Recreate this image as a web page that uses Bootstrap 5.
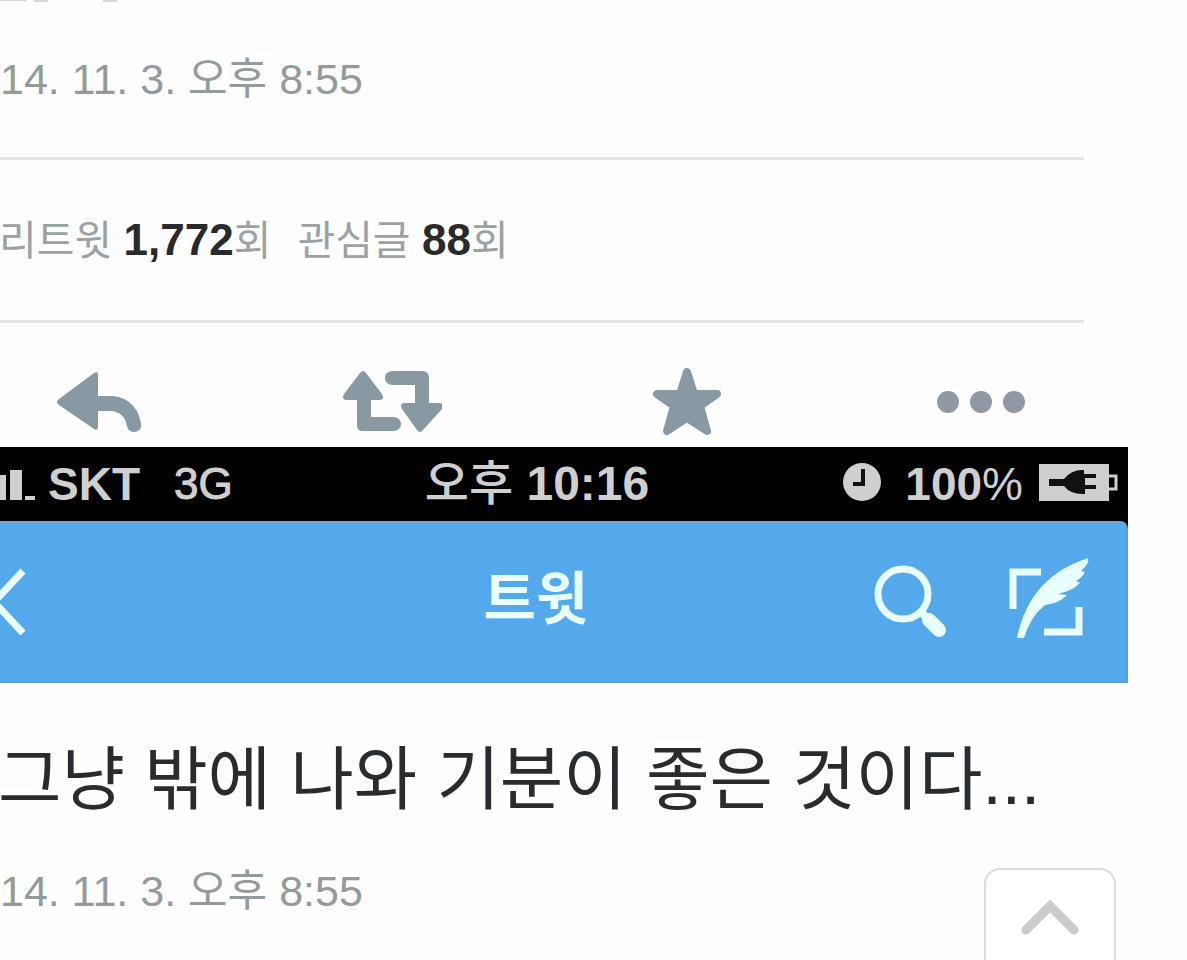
<!DOCTYPE html>
<html lang="ko">
<head>
<meta charset="utf-8">
<meta name="viewport" content="width=device-width, initial-scale=1">
<title>트윗</title>
<link href="https://cdn.jsdelivr.net/npm/bootstrap@5.3.0/dist/css/bootstrap.min.css" rel="stylesheet">
<style>
body{font-family:"Liberation Sans","Noto Sans CJK KR",sans-serif;background:#fefefe;color:#292c2f;overflow:hidden}
.phone{margin-right:59px}
.stamp{font-size:43px;line-height:60px;color:#929a9d}
.pre{height:49px}
.ruled{border-top:3px solid #e3e4e5;border-bottom:3px solid #e3e4e5;margin:48px 44px 0 0;height:166px}
.stats{font-size:41px;line-height:60px;color:#9aa2a6;gap:26px;margin-left:-1px}
.stats a{color:inherit}
.stats strong{font-size:44px;color:#292a2c}
.actions{height:124px;margin-left:-49px;padding-top:45px}
.plain{border:0;background:none;padding:0;line-height:0}
.status{background:#000;color:#cfcfcf;height:74px;font-size:46px;line-height:74px;font-weight:700}
.net{font-weight:400;-webkit-text-stroke:1px;font-size:44px;margin-left:34px}
.clock{font-size:48px}
.hangul{font-weight:500}
.percent{font-weight:400}
.topbar{background:#54a9ed;height:162px;color:#e9ffff;border-top:2px solid #6fa9d6;border-bottom:2px solid #5b9fd4;border-right:2px solid #5b9fd4;border-top-right-radius:8px}
.barwrap{background:linear-gradient(#000 16px,transparent 16px)}
/* the phone frame runs on past the left edge of the window */
.status,.topbar{margin-left:-54px}
.side{flex:1 1 0}
.lead-side>:first-child{margin-left:54px}
.topbar h1{font-size:57px;line-height:70px;font-weight:700;padding-bottom:6px}
.search{margin-right:57px}
.tweet{font-size:69px;line-height:96px;margin:50px 0 0 -2px}
.later{margin-top:32px}
.totop{right:71px;bottom:-40px;width:132px;height:132px;border:2px solid #dcdcdc;border-radius:16px;background:#fff;padding-top:28px}
</style>
</head>
<body>
<main class="phone">
  <div class="pre"><svg class="d-block" width="140" height="5" fill="#d4d6d7" aria-hidden="true"><path d="M0 0h26v1H0zM34 0h14v2H34zM103 0h14v2h-14z"/></svg></div>
  <div class="stamp text-nowrap">14. 11. 3. 오후 8:55</div>
  <section class="ruled d-flex align-items-center">
    <div class="stats d-flex text-nowrap">
      <a href="#" class="text-decoration-none">리트윗 <strong>1,772</strong>회</a>
      <a href="#" class="text-decoration-none">관심글 <strong>88</strong>회</a>
    </div>
  </section>
  <div class="actions row g-0 text-center">
    <div class="col-3"><button class="plain" aria-label="답글"><svg width="100" height="72" viewBox="0 0 100 72" fill="#8899a4"><path d="M50 7q0-4-4-2L11 31q-4 3 0 6l35 24q4 2 4-2V43h12c9 0 14 5 16 11 1 6 3 10 8 10s8-4 7-9c-3-17-15-27-31-27H50z"/></svg></button></div>
    <div class="col-3"><button class="plain" aria-label="리트윗"><svg width="100" height="72" viewBox="0 0 100 72" fill="#8899a4"><path d="M18 5q3-4 6 0l16 21q3 6-3 6h-8v17h22c5 0 8 3 8 7s-3 7-8 7H21q-6 0-6-6V32H5q-6 0-3-6zM81 62q-3 4-6 0L60 41q-3-6 3-6h10V17H51c-5 0-8-3-8-7s3-7 8-7h29q7 0 7 7v25h10q6 0 3 6z"/></svg></button></div>
    <div class="col-3"><button class="plain" aria-label="관심글"><svg width="100" height="72" viewBox="0 0 100 72" fill="#8899a4" stroke="#8899a4" stroke-width="8" stroke-linejoin="round"><path d="M50 4l7 22h23L63 38l7 25-20-13-20 13 7-25-17-12h23z"/></svg></button></div>
    <div class="col-3"><button class="plain" aria-label="더 보기"><svg width="100" height="72" viewBox="0 0 100 72"><g fill="#8f98a3"><circle cx="17" cy="34" r="11"/><circle cx="50" cy="34" r="11"/><circle cx="83" cy="34" r="11"/></g></svg></button></div>
  </div>
  <header>
    <div class="status d-flex align-items-center text-nowrap">
      <div class="side lead-side d-flex align-items-center">
        <svg width="48" height="44" fill="#cfcfcf" aria-hidden="true"><path d="M0 13h6v25H0zM10 8h12v30H10zM25 34h10v4H25z"/></svg>
        <span>SKT</span><span class="net">3G</span>
      </div>
      <div class="clock"><span class="hangul">오후</span> 10:16</div>
      <div class="side d-flex align-items-center justify-content-end">
        <svg width="62" height="44" viewBox="0 0 62 44" aria-hidden="true"><circle cx="19" cy="20" r="19" fill="#cfcfcf"/><path d="M20 7v15H10" fill="none" stroke="#111" stroke-width="4"/></svg>
        <span>100</span><span class="percent">%</span>
        <svg width="89" height="44" viewBox="0 0 89 44" class="ms-3" aria-hidden="true"><path d="M0 2h70v37H0z" fill="#cfcfcf"/><path d="M70 14h7v13h-7" fill="none" stroke="#cfcfcf" stroke-width="3"/><path d="M10 17h15q8-10 20-9v4h12v4H46v7h11v4H46v5q-14 1-21-8H10z" fill="#111"/></svg>
      </div>
    </div>
    <div class="barwrap">
    <nav class="topbar d-flex align-items-center">
      <div class="side lead-side"><button class="plain" aria-label="뒤로"><svg width="30" height="80" viewBox="0 0 30 80" fill="none" stroke="#e9ffff" stroke-width="7"><path d="M23 9L-6 40l29 31"/></svg></button></div>
      <h1 class="mb-0">트윗</h1>
      <div class="side d-flex justify-content-end">
        <button class="plain search" aria-label="검색"><svg width="84" height="84" viewBox="0 0 84 84" fill="none" stroke="#e9ffff"><circle cx="36" cy="34" r="25" stroke-width="7"/><path d="M54 52l5 5" stroke-width="8"/><path d="M62 60l10 10" stroke-width="14" stroke-linecap="round"/></svg></button>
        <button class="plain" aria-label="트윗 작성"><svg width="118" height="90" viewBox="0 0 118 90"><path d="M5 52V15h28M71 50v25H36" fill="none" stroke="#e9ffff" stroke-width="7"/><path d="M9 81C16 49 32 17 80 1q2 5-7 13l4 1q-3 6-9 9l4 2q-5 5-12 8l-10 3 9 1q-7 8-22 10Q22 60 16 81z" fill="#e9ffff"/></svg></button>
      </div>
    </nav>
    </div>
  </header>
  <p class="tweet text-nowrap">그냥 밖에 나와 기분이 좋은 것이다...</p>
  <div class="stamp later text-nowrap">14. 11. 3. 오후 8:55</div>
</main>
<button class="totop position-fixed d-flex justify-content-center" aria-label="맨 위로"><svg width="64" height="40" viewBox="0 0 64 40" fill="none" stroke="#cbcbcb" stroke-width="9" stroke-linecap="round"><path d="M8 32L32 8l24 24"/></svg></button>
<script src="https://cdn.jsdelivr.net/npm/bootstrap@5.3.0/dist/js/bootstrap.bundle.min.js"></script>
</body>
</html>
